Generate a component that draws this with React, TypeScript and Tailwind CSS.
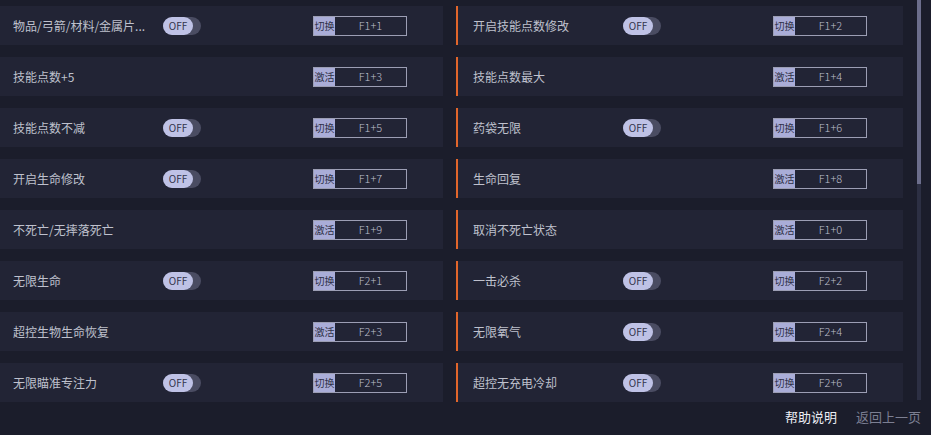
import React from 'react';

type Item = { label: string; mode: 'toggle' | 'activate'; key: string };

const left: Item[] = [
  { label: '物品/弓箭/材料/金属片...', mode: 'toggle', key: 'F1+1' },
  { label: '技能点数+5', mode: 'activate', key: 'F1+3' },
  { label: '技能点数不减', mode: 'toggle', key: 'F1+5' },
  { label: '开启生命修改', mode: 'toggle', key: 'F1+7' },
  { label: '不死亡/无摔落死亡', mode: 'activate', key: 'F1+9' },
  { label: '无限生命', mode: 'toggle', key: 'F2+1' },
  { label: '超控生物生命恢复', mode: 'activate', key: 'F2+3' },
  { label: '无限瞄准专注力', mode: 'toggle', key: 'F2+5' },
];

const right: Item[] = [
  { label: '开启技能点数修改', mode: 'toggle', key: 'F1+2' },
  { label: '技能点数最大', mode: 'activate', key: 'F1+4' },
  { label: '药袋无限', mode: 'toggle', key: 'F1+6' },
  { label: '生命回复', mode: 'activate', key: 'F1+8' },
  { label: '取消不死亡状态', mode: 'activate', key: 'F1+0' },
  { label: '一击必杀', mode: 'toggle', key: 'F2+2' },
  { label: '无限氧气', mode: 'toggle', key: 'F2+4' },
  { label: '超控无充电冷却', mode: 'toggle', key: 'F2+6' },
];

function Toggle() {
  return (
    <div className="flex h-[18px] w-[38px] rounded-full bg-[#4a4c62]">
      <div className="flex h-[18px] w-[30px] items-center justify-center rounded-full bg-[#bfc2e6] text-[10px] leading-none text-[#33354d]">
        OFF
      </div>
    </div>
  );
}

function KeyBox({ mode, k }: { mode: Item['mode']; k: string }) {
  return (
    <div className="flex h-[20px] w-[94px] border border-[#9c9eb4]">
      <div className="flex w-[21px] items-center justify-center bg-[#aaadd8] text-[10px] leading-none text-[#2e3048]">
        {mode === 'toggle' ? '切换' : '激活'}
      </div>
      <div className="flex flex-1 items-center justify-center text-[11px] font-light leading-none text-[#bdbfcc]">
        {k}
      </div>
    </div>
  );
}

function Row({ item, accent }: { item: Item; accent?: boolean }) {
  return (
    <div
      className={
        'flex h-[39px] items-center bg-[#222435] ' +
        (accent ? 'border-l-2 border-[#e2662b] pl-[15px]' : 'pl-[13px]')
      }
    >
      <div className="w-[150px] truncate text-[12px] text-[#bfc1cd]">{item.label}</div>
      <div className="w-[150px]">{item.mode === 'toggle' && <Toggle />}</div>
      <KeyBox mode={item.mode} k={item.key} />
    </div>
  );
}

export default function App() {
  return (
    <div
      className="relative h-[435px] w-[931px] overflow-hidden bg-[#1b1d2b]"
      style={{ fontFamily: '"Noto Sans CJK SC", "Noto Sans", sans-serif' }}
    >
      <div className="flex pt-[6px]">
        <div className="grid w-[903px] grid-cols-[443px_447px] gap-x-[13px] gap-y-[12px]">
          {left.map((item, i) => (
            <React.Fragment key={i}>
              <Row item={item} />
              <Row item={right[i]} accent />
            </React.Fragment>
          ))}
        </div>
        <div className="ml-[14px] mt-[-6px] flex h-[400px] w-[4px] flex-col bg-[#2c2f43]">
          <div className="h-[184px] w-full bg-[#6c6e8c]" />
        </div>
      </div>
      <div className="flex justify-end gap-[19px] pr-[10px] pt-[5px] text-[13px]">
        <span className="text-[#eceef4]">帮助说明</span>
        <span className="text-[#7c7f92]">返回上一页</span>
      </div>
    </div>
  );
}
